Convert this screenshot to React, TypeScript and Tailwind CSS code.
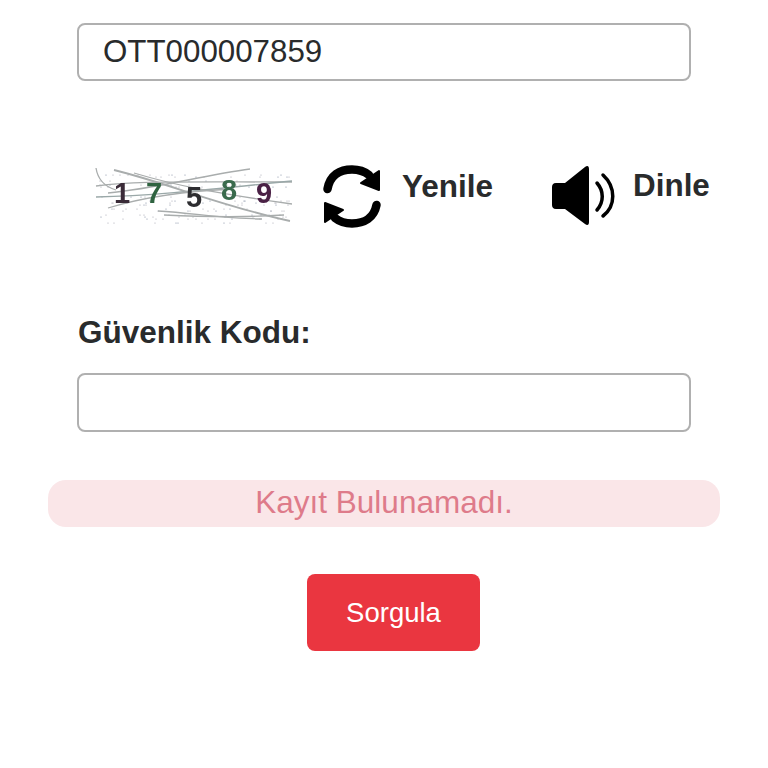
const dots = Array.from({ length: 150 }, (_, i) => ({
  x: ((i * i * 17 + i * 73 + 11) % 197) + 1,
  y: ((i * i * 7 + i * 37 + 7) % 58) + 1,
}));

function Captcha() {
  return (
    <svg width="200" height="60" viewBox="0 0 200 60" className="shrink-0 blur-[0.4px]">
      {dots.map((d, i) => (
        <circle key={i} cx={d.x} cy={d.y} r="0.6" fill={i % 3 === 0 ? "#7f8ba0" : "#a5a5b2"} />
      ))}
      <g fill="none" stroke="#a9adad" strokeWidth="1.3">
        <path d="M2 1 C4 14 12 20 22 23" />
        <path d="M2 19 C40 14 70 15 198 15" />
        <path d="M2 30 C60 29 120 22 198 14" stroke="#9aa8a8" />
        <path d="M20 3 C70 15 130 40 196 54" strokeWidth="1.8" />
        <path d="M40 6 C80 18 120 26 198 37" />
        <path d="M14 26 C60 22 110 8 156 2" />
        <path d="M14 41 C50 30 90 24 140 22" />
        <path d="M70 48 C110 50 160 50 190 48" />
        <path d="M64 44 C100 46 130 52 168 52" />
      </g>
      <g fontFamily="'Liberation Sans', sans-serif" fontWeight="700" fontSize="29">
        <text x="20" y="36" fill="#3a2b38">1</text>
        <text x="52" y="36" fill="#2f6340">7</text>
        <text x="92" y="40" fill="#2d2d30">5</text>
        <text x="127" y="33" fill="#3a6b4d">8</text>
        <text x="162" y="36" fill="#4a2145">9</text>
      </g>
    </svg>
  );
}

function RefreshIcon() {
  return (
    <svg width="60" height="66" viewBox="0 0 60 66" className="shrink-0">
      <g fill="none" stroke="#000" strokeWidth="8.500" strokeLinecap="round">
        <path d="M5.500 25 C8 11 18 5.500 30 5.500 C37 5.500 42 7 47 11" />
        <path d="M54.500 41 C52 54 42 59.500 30 59.500 C23 59.500 18 58 13 54" />
      </g>
      <path d="M57 7 L57 26 L39 19 Z" fill="#000" stroke="#000" strokeWidth="2" strokeLinejoin="round" />
      <path d="M3 39 L3 58 L21 46 Z" fill="#000" stroke="#000" strokeWidth="2" strokeLinejoin="round" />
    </svg>
  );
}

function SpeakerIcon() {
  return (
    <svg width="66" height="66" viewBox="0 0 66 66" className="shrink-0">
      <path
        d="M5 19 C2 19 1 21 1 23 L1 41 C1 43 2 45 5 45 L14 45 L34 60 C36.500 62 38 61 38 58 L38 5 C38 2 36.500 1 34 3 L14 19 Z"
        fill="#000"
      />
      <g fill="none" stroke="#000" strokeWidth="3.500" strokeLinecap="round">
        <path d="M46 19 C53 27 53 38 46 46" />
        <path d="M52 11 C65 23 65 42 52 52" />
      </g>
    </svg>
  );
}

export default function App() {
  return (
    <div className="w-[768px] h-[768px] overflow-hidden bg-white pt-[23px] font-['Liberation_Sans',Arial,sans-serif] text-[#292b2c]">
      <div className="mx-[77px] w-[614px] h-[58px] rounded-lg border-2 border-[#b0b0b0] pl-6 flex items-center text-[31.3px]">
        OTT000007859
      </div>

      <div className="mt-[83px] ml-[94px] h-[66px] flex items-center">
        <Captcha />
        <div className="ml-[28px]">
          <RefreshIcon />
        </div>
        <span className="ml-[20px] mb-[22px] text-[31.5px] font-bold leading-9">Yenile</span>
        <div className="ml-[58px]">
          <SpeakerIcon />
        </div>
        <span className="ml-[16px] mb-[22px] text-[31.4px] font-bold leading-9">Dinle</span>
      </div>

      <div className="mt-[84px] ml-[78px] text-[31.5px] font-bold leading-9">Güvenlik Kodu:</div>

      <div className="mt-[23px] mx-[77px] w-[614px] h-[59px] rounded-lg border-2 border-[#b0b0b0]" />

      <div className="mt-[48px] mx-[48px] w-[672px] h-[47px] pb-[2px] rounded-[18px] bg-[#fae6e8] flex items-center justify-center text-[31.5px] text-[#de7b8a]">
        Kayıt Bulunamadı.
      </div>

      <div className="mt-[47px] flex">
        <button className="ml-[307px] w-[173px] h-[77px] rounded-lg bg-[#ea3640] text-white text-[27.5px]">
          Sorgula
        </button>
      </div>
    </div>
  );
}
